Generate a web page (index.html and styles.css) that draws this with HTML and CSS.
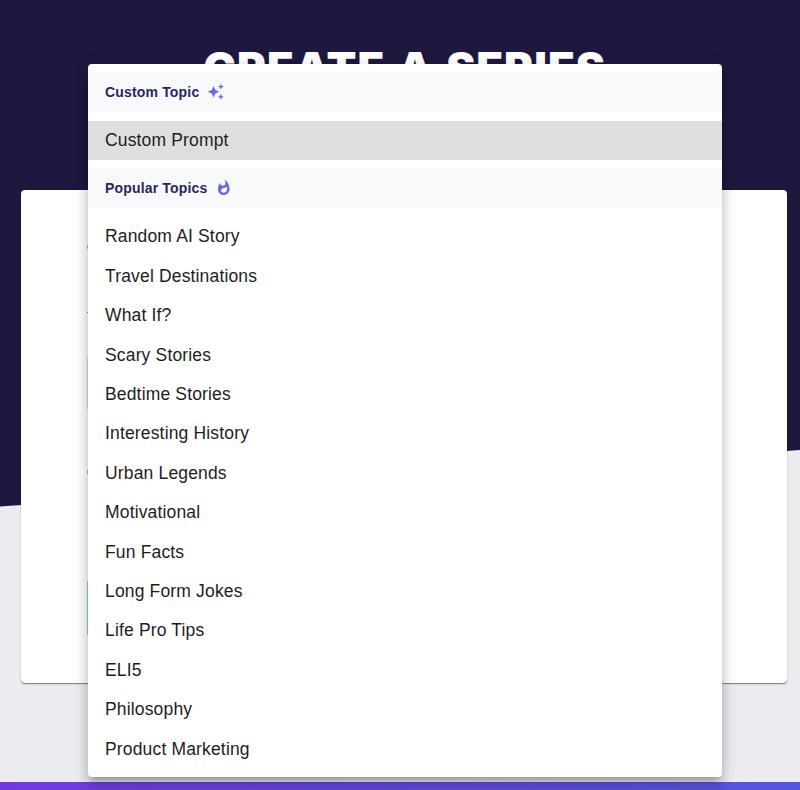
FILE: index.html
```
<!DOCTYPE html>
<html lang="en">
<head>
<meta charset="utf-8">
<title>Create a Series</title>
<link rel="stylesheet" href="styles.css">
</head>
<body>
<main class="page">
  <div class="backdrop"></div>
  <h1 class="title">CREATE A SERIES</h1>
  <section class="panel">
    <div class="step-dot first"></div>
    <div class="hint-mark"></div>
    <div class="field"></div>
    <div class="step-dot second"></div>
    <div class="field action"></div>
  </section>
  <footer class="footer"></footer>
  <div class="menu">
    <div class="group">Custom Topic
      <svg class="icon sparkle" viewBox="0 0 24 24"><path d="m19 9 1.25-2.75L23 5l-2.75-1.25L19 1l-1.25 2.75L15 5l2.75 1.25L19 9zm-7.5.5L9 4 6.5 9.5 1 12l5.5 2.5L9 20l2.5-5.5L17 12l-5.5-2.5zM19 15l-1.25 2.75L15 19l2.75 1.25L19 23l1.25-2.75L23 19l-2.75-1.25L19 15z"/></svg>
    </div>
    <ul class="options single">
      <li class="option selected">Custom Prompt</li>
    </ul>
    <div class="group">Popular Topics
      <svg class="icon" viewBox="0 0 24 24"><path d="M13.5.67s.74 2.65.74 4.8c0 2.06-1.35 3.73-3.41 3.73-2.07 0-3.63-1.67-3.63-3.73l.03-.36C5.21 7.51 4 10.62 4 14c0 4.42 3.58 8 8 8s8-3.58 8-8C20 8.61 17.41 3.8 13.5.67zM11.71 19c-1.78 0-3.22-1.4-3.22-3.14 0-1.62 1.05-2.76 2.81-3.12 1.77-.36 3.6-1.21 4.62-2.58.39 1.29.59 2.65.59 4.04 0 2.65-2.15 4.8-4.8 4.8z"/></svg>
    </div>
    <ul class="options">
      <li class="option">Random AI Story</li>
      <li class="option">Travel Destinations</li>
      <li class="option">What If?</li>
      <li class="option">Scary Stories</li>
      <li class="option">Bedtime Stories</li>
      <li class="option">Interesting History</li>
      <li class="option">Urban Legends</li>
      <li class="option">Motivational</li>
      <li class="option">Fun Facts</li>
      <li class="option">Long Form Jokes</li>
      <li class="option">Life Pro Tips</li>
      <li class="option">ELI5</li>
      <li class="option">Philosophy</li>
      <li class="option">Product Marketing</li>
    </ul>
  </div>
</main>
</body>
</html>
```
FILE: styles.css
```
* { box-sizing: border-box; }
body { margin: 0; }
.page {
  position: relative;
  display: flex;
  flex-direction: column;
  height: 790px;
  overflow: hidden;
  background: #ebebf0;
  font-family: "Liberation Sans", Arial, sans-serif;
}
.backdrop {
  position: absolute;
  inset: 0;
  background: #1e183f;
  clip-path: polygon(0 0, 100% 0, 100% 450px, 0 506.5px);
}
.title {
  position: relative;
  margin: 42px 0 0 9px;
  height: 50px;
  text-align: center;
  white-space: nowrap;
  color: #fff;
  font: 900 43px/50px Inter, sans-serif;
  letter-spacing: 1px;
  word-spacing: 3px;
  transform: scaleX(1.014);
}
.panel {
  position: relative;
  width: 766px;
  height: 493px;
  margin: 98px 0 0 21.4px;
  padding: 54px 66px 0 65.6px;
  flex: none;
  background: #fff;
  border-radius: 4px;
  box-shadow: 0 1px 1px rgba(0, 0, 0, .38), 0 1px 2px rgba(0, 0, 0, .15);
}
.step-dot {
  width: 6px;
  height: 6px;
  border-radius: 50%;
  background: #a5a1dc;
}
.hint-mark {
  width: 4px;
  height: 1px;
  margin-top: 62px;
  background: #888;
}
.field {
  height: 58px;
  margin-top: 41px;
  border: 1px solid #dcdcdc;
  border-radius: 4px;
}
.second { margin-top: 57px; }
.action {
  margin-top: 104px;
  background: #83cdf8;
  border-color: #83cdf8;
}
.footer {
  position: relative;
  height: 8.5px;
  margin-top: auto;
  flex: none;
  background: linear-gradient(90deg, #713ae0, #5556dc);
}
.menu {
  position: absolute;
  left: 87.5px;
  top: 63.5px;
  width: 634.5px;
  height: 713.5px;
  padding-top: 8.5px;
  overflow: hidden;
  background: #fff;
  border-radius: 4px;
  box-shadow: 0 5px 5px -3px rgba(0, 0, 0, .2), 0 8px 11px 1px rgba(0, 0, 0, .14), 0 3px 15px 2px rgba(0, 0, 0, .12);
}
.group {
  display: flex;
  align-items: center;
  gap: 8px;
  height: 40px;
  padding-left: 17.5px;
  background: #f7f9fb;
  color: #2b2562;
  font-size: 14px;
  font-weight: 700;
  letter-spacing: .17px;
}
.icon {
  width: 17.5px;
  height: 17.5px;
  fill: #6d67e4;
}
.options {
  list-style: none;
  margin: 0;
  padding: 9.5px 0 0;
}
.single { padding: 8.5px 0 8px; }
.option {
  height: 39.42px;
  padding-left: 17.5px;
  line-height: 39.42px;
  color: #1d1d1d;
  font-size: 17.5px;
  letter-spacing: .16px;
}
.selected { background: #dfdfdf; }
```
